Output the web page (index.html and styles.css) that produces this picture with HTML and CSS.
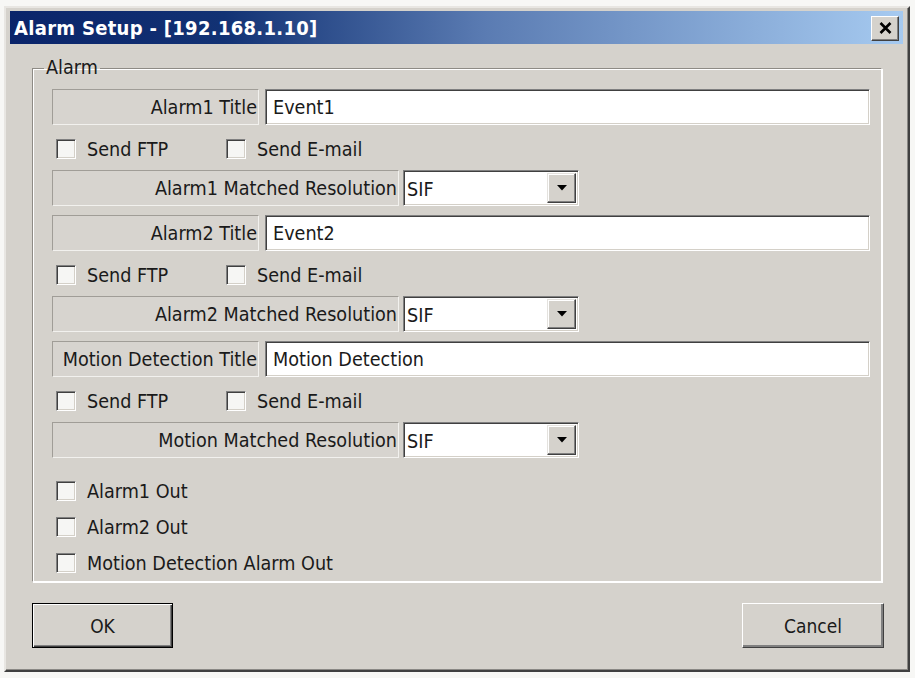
FILE: index.html
```html
<!DOCTYPE html>
<html>
<head>
<meta charset="utf-8">
<title>Alarm Setup</title>
<link rel="stylesheet" href="styles.css">
</head>
<body>
<div class="window">
  <div class="titlebar">
    <span class="title">Alarm Setup - [192.168.1.10]</span>
    <span class="close"><svg width="13" height="12" viewBox="0 0 13 12"><path d="M1.5 1 L11.5 11 M11.5 1 L1.5 11" stroke="#000" stroke-width="2.6"/></svg></span>
  </div>
  <fieldset class="group">
    <legend>Alarm</legend>
    <div class="block">
      <div class="row title-row"><div class="lbl lbl-title">Alarm1 Title</div><div class="edit">Event1</div></div>
      <div class="row check-row"><div class="chk chk-first"><span class="box"></span>Send FTP</div><div class="chk"><span class="box"></span>Send E-mail</div></div>
      <div class="row res-row"><div class="lbl lbl-res">Alarm1 Matched Resolution</div><div class="combo"><span class="combo-text">SIF</span><span class="combo-btn"><svg width="10" height="6" viewBox="0 0 10 6"><path d="M0 0 H10 L5 5.5 Z" fill="#000"/></svg></span></div></div>
    </div>
    <div class="block">
      <div class="row title-row"><div class="lbl lbl-title">Alarm2 Title</div><div class="edit">Event2</div></div>
      <div class="row check-row"><div class="chk chk-first"><span class="box"></span>Send FTP</div><div class="chk"><span class="box"></span>Send E-mail</div></div>
      <div class="row res-row"><div class="lbl lbl-res">Alarm2 Matched Resolution</div><div class="combo"><span class="combo-text">SIF</span><span class="combo-btn"><svg width="10" height="6" viewBox="0 0 10 6"><path d="M0 0 H10 L5 5.5 Z" fill="#000"/></svg></span></div></div>
    </div>
    <div class="block block-last">
      <div class="row title-row"><div class="lbl lbl-title">Motion Detection Title</div><div class="edit">Motion Detection</div></div>
      <div class="row check-row"><div class="chk chk-first"><span class="box"></span>Send FTP</div><div class="chk"><span class="box"></span>Send E-mail</div></div>
      <div class="row res-row"><div class="lbl lbl-res">Motion Matched Resolution</div><div class="combo"><span class="combo-text">SIF</span><span class="combo-btn"><svg width="10" height="6" viewBox="0 0 10 6"><path d="M0 0 H10 L5 5.5 Z" fill="#000"/></svg></span></div></div>
    </div>
    <div class="row out-row"><div class="chk"><span class="box"></span>Alarm1 Out</div></div>
    <div class="row out-row"><div class="chk"><span class="box"></span>Alarm2 Out</div></div>
    <div class="row out-row"><div class="chk"><span class="box"></span>Motion Detection Alarm Out</div></div>
  </fieldset>
  <div class="buttons">
    <div class="btn btn-default">OK</div>
    <div class="btn">Cancel</div>
  </div>
</div>
</body>
</html>
```

FILE: styles.css
```css
html, body {
  margin: 0;
  padding: 0;
  background: #f7f7f5;
}
body {
  font-family: "DejaVu Sans Condensed", "DejaVu Sans", sans-serif;
  font-stretch: condensed;
  font-size: 19.6px;
  color: #1a1a1a;
}
.window {
  box-sizing: border-box;
  margin: 6px 0 0 4px;
  width: 906px;
  height: 666px;
  background: #d5d2cc;
  border: 2px solid;
  border-color: #e8e6e2 #404040 #404040 #e8e6e2;
  box-shadow: inset -1px -1px #8a8884;
  padding: 3px 5px 0 4px;
}
.titlebar {
  height: 33px;
  display: flex;
  align-items: center;
  justify-content: space-between;
  background: linear-gradient(to right, #0a246a 0%, #123274 24%, #5a7bb2 53%, #a6caf0 100%);
  padding: 0 4px 0 4px;
}
.title {
  color: #fff;
  font-weight: bold;
  font-size: 20px;
  letter-spacing: 0.3px;
}
.close {
  box-sizing: border-box;
  width: 28px;
  height: 25px;
  display: flex;
  align-items: center;
  justify-content: center;
  background: #d5d2cc;
  border: 1px solid;
  border-color: #fff #404040 #404040 #fff;
  box-shadow: inset -1px -1px #808080;
  margin-top: 1px;
}
.group {
  margin: 15px 21px 0 22px;
  padding: 12px 11px 0 19px;
  border-style: solid;
  border-width: 1px;
  border-color: #8e8b85 #fff #fff #8e8b85;
  box-shadow: 1px 1px #fff, inset 1px 1px #fff;
}
.group legend {
  margin-left: -8px;
  padding: 0 2px;
  line-height: 18px;
  height: 18px;
}
.block {
  margin-bottom: 9px;
}
.block-last {
  margin-bottom: 15px;
}
.row {
  display: flex;
  align-items: stretch;
}
.title-row, .res-row {
  height: 36px;
}
.check-row {
  height: 45px;
  align-items: center;
  padding-top: 3px;
  box-sizing: border-box;
}
.out-row {
  height: 36px;
  align-items: center;
}
.lbl {
  box-sizing: border-box;
  display: flex;
  align-items: center;
  justify-content: flex-end;
  padding-right: 1px;
  border: 1px solid;
  border-color: #a09d97 #f2f1ee #f2f1ee #a09d97;
  background: #d7d4cf;
  white-space: nowrap;
}
.lbl-title {
  width: 207px;
  margin-right: 6px;
}
.lbl-res {
  width: 347px;
  margin-right: 4px;
}
.edit {
  flex: 1;
  box-sizing: border-box;
  display: flex;
  align-items: center;
  background: #fff;
  border: 1px solid;
  border-color: #808080 #fff #fff #808080;
  box-shadow: inset 1px 1px #404040, inset -1px -1px #d4d0c8;
  padding-left: 7px;
}
.combo {
  width: 176px;
  box-sizing: border-box;
  display: flex;
  align-items: center;
  justify-content: space-between;
  background: #fff;
  border: 1px solid;
  border-color: #808080 #fff #fff #808080;
  box-shadow: inset 1px 1px #404040, inset -1px -1px #d4d0c8;
  padding: 2px 2px 2px 3px;
}
.combo-text {
  padding-top: 2px;
}
.combo-btn {
  box-sizing: border-box;
  width: 29px;
  height: 30px;
  display: flex;
  align-items: center;
  justify-content: center;
  background: #d5d2cc;
  border: 1px solid;
  border-color: #e4e2de #404040 #404040 #e4e2de;
  box-shadow: inset -1px -1px #808080, inset 1px 1px #fff;
}
.chk {
  display: flex;
  align-items: center;
  margin-left: 4px;
  white-space: nowrap;
}
.chk-first {
  width: 166px;
}
.box {
  box-sizing: border-box;
  width: 20px;
  height: 20px;
  margin-right: 11px;
  background: #f6f6f4;
  border: 1px solid;
  border-color: #808080 #fff #fff #808080;
  box-shadow: inset 1px 1px #404040, inset -1px -1px #d4d0c8;
}
.buttons {
  display: flex;
  justify-content: space-between;
  margin-top: 21px;
  padding: 0 19px 0 22px;
}
.btn {
  box-sizing: border-box;
  width: 142px;
  height: 45px;
  display: flex;
  align-items: center;
  justify-content: center;
  background: #d5d2cc;
  border: 1px solid;
  border-color: #fff #404040 #404040 #fff;
  box-shadow: inset -2px -2px #808080;
  font-size: 19px;
}
.btn-default {
  width: 141px;
  border: 1px solid #000;
  box-shadow: inset 1px 1px #fff, inset -1px -1px #404040, inset -2px -2px #808080;
}
```
